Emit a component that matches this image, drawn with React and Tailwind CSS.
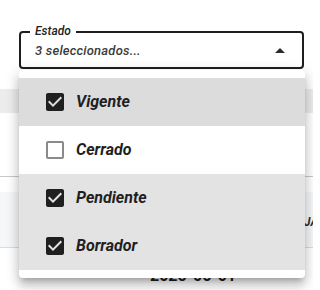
import React from "react";

const CheckedIcon = () => (
  <svg width="24" height="24" viewBox="0 0 24 24" className="shrink-0">
    <path
      fill="#1f1f1f"
      d="M19 3H5c-1.11 0-2 .9-2 2v14c0 1.1.89 2 2 2h14c1.11 0 2-.9 2-2V5c0-1.1-.89-2-2-2zm-9 14l-5-5 1.41-1.41L10 14.17l7.59-7.59L19 8l-9 9z"
    />
  </svg>
);

const UncheckedIcon = () => (
  <svg width="24" height="24" viewBox="0 0 24 24" className="shrink-0">
    <path
      fill="#8a8a8a"
      d="M19 5v14H5V5h14m0-2H5c-1.1 0-2 .9-2 2v14c0 1.1.9 2 2 2h14c1.1 0 2-.9 2-2V5c0-1.1-.9-2-2-2z"
    />
  </svg>
);

const items = [
  { label: "Vigente", checked: true, bg: "bg-[#dcdcdc]" },
  { label: "Cerrado", checked: false, bg: "bg-white" },
  { label: "Pendiente", checked: true, bg: "bg-[#e3e3e3]" },
  { label: "Borrador", checked: true, bg: "bg-[#e3e3e3]" },
];

export default function App() {
  return (
    <div
      className="relative w-[313px] h-[290px] overflow-hidden bg-white"
      style={{ fontFamily: "Roboto, 'Noto Sans', sans-serif" }}
    >
      {/* page content beneath */}
      <div className="flex flex-col">
        <div className="h-[89px] bg-white pt-[31px] px-[19px] pr-[9px]">
          <div className="relative h-[38px] border-2 border-[#1e1e1e] rounded-[4px] flex items-center pl-[14px] pr-[17px]">
            <span className="absolute left-[9px] top-[-8px] bg-white px-[5px] text-[12px] leading-[12px] italic font-medium text-[#222]">
              Estado
            </span>
            <span className="flex-1 pt-[2px] text-[13px] leading-[14px] italic font-medium text-[#3a3a3a] tracking-[0.2px]">
              3 seleccionados...
            </span>
            <svg width="10" height="5" viewBox="0 0 10 5" className="shrink-0 mt-[0px]">
              <polygon points="0,5 5,0 10,5" fill="#2a2a2a" />
            </svg>
          </div>
        </div>
        <div className="h-[24px] bg-[#ececec]" />
        <div className="h-[64px] bg-white border-b border-[#c8c8c8]" />
        <div className="h-[15px] bg-white" />
        <div className="h-[56px] bg-[#f6f7f9] border-b border-[#dcdcdc] flex items-center pl-[304px] pt-[4px]">
          <span className="text-[12px] font-bold italic text-[#333]">JA</span>
        </div>
        <div className="h-[20px]" />
        <div className="flex pl-[150px]">
          <span className="text-[16px] leading-[16px] font-bold text-[#1f1f1f]">2025-06-01</span>
        </div>
      </div>

      {/* dropdown menu */}
      <div className="absolute left-[19px] top-[70px] w-[286px] bg-white rounded-[4px] py-[8px] shadow-[0px_5px_5px_-3px_rgba(0,0,0,0.2),0px_8px_10px_1px_rgba(0,0,0,0.14),0px_3px_14px_2px_rgba(0,0,0,0.12)]">
        {items.map((it) => (
          <div
            key={it.label}
            className={`h-[48px] flex items-center pl-[24px] gap-[9px] ${it.bg}`}
          >
            {it.checked ? <CheckedIcon /> : <UncheckedIcon />}
            <span className="text-[16px] font-bold italic text-[#1f1f1f]">
              {it.label}
            </span>
          </div>
        ))}
      </div>
    </div>
  );
}
